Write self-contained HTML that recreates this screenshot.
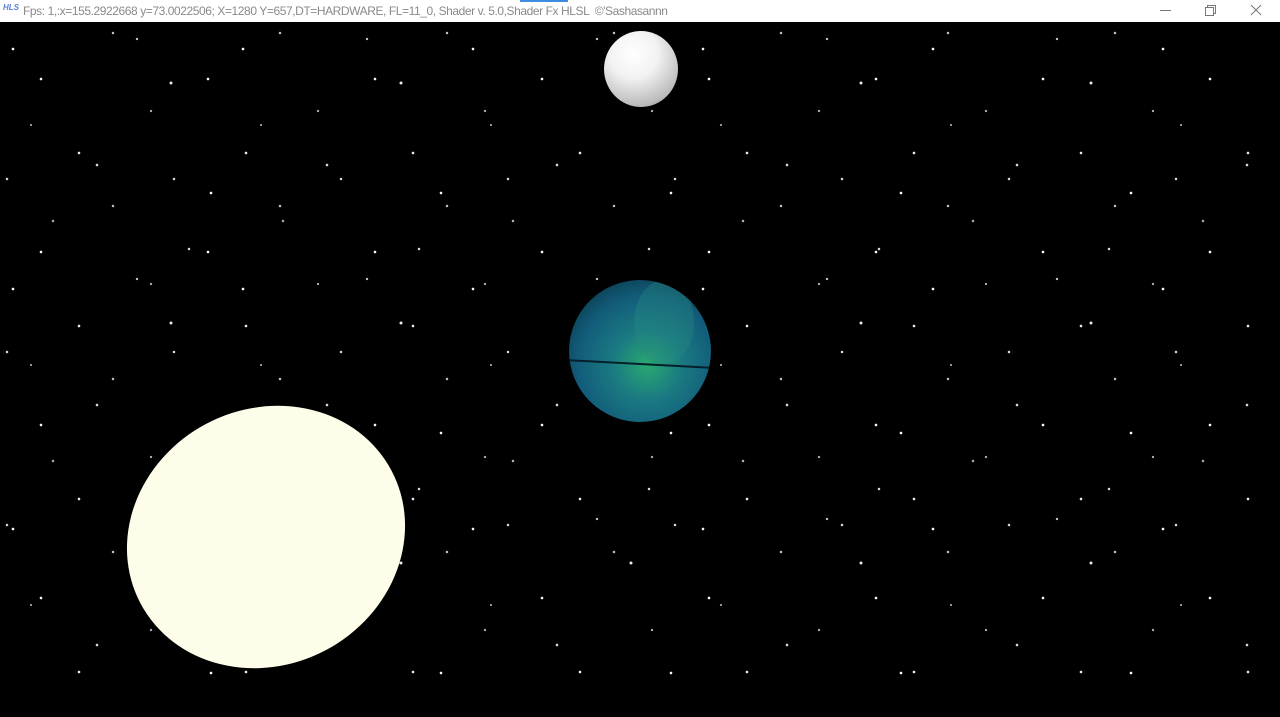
<!DOCTYPE html>
<html><head><style>
html,body{margin:0;padding:0;width:1280px;height:680px;overflow:hidden;background:#000;font-family:"Liberation Sans",sans-serif}
#bar{position:absolute;left:0;top:0;width:1280px;height:22px;background:#fff}
#bar .t{position:absolute;left:23px;top:4px;font-size:12px;color:#8a8a8a;letter-spacing:-0.42px;white-space:nowrap}
#bar .logo{position:absolute;left:3px;top:3px;font-size:8px;color:#5a7fd0;font-style:italic;font-weight:bold}
#blue{position:absolute;left:520px;top:0;width:48px;height:2px;background:#3c8ce0}
#sky{position:absolute;left:0;top:22px;width:1280px;height:658px;
background-image:
radial-gradient(circle at 13px 27px,#fff 1px,transparent 1.6px),
radial-gradient(circle at 97px 143px,#ddd 1px,transparent 1.6px),
radial-gradient(circle at 171px 61px,#eee 1.2px,transparent 1.8px),
radial-gradient(circle at 53px 199px,#bbb 0.9px,transparent 1.5px),
radial-gradient(circle at 211px 171px,#fff 1px,transparent 1.6px),
radial-gradient(circle at 137px 17px,#ccc 0.9px,transparent 1.4px),
radial-gradient(circle at 31px 103px,#aaa 0.8px,transparent 1.3px),
radial-gradient(circle at 189px 227px,#ddd 1px,transparent 1.5px);
background-size:230px 240px}
#sky2{position:absolute;left:0;top:22px;width:1280px;height:658px;
background-image:
radial-gradient(circle at 41px 57px,#fff 1px,transparent 1.6px),
radial-gradient(circle at 113px 11px,#ccc 0.9px,transparent 1.5px),
radial-gradient(circle at 79px 131px,#eee 1px,transparent 1.6px),
radial-gradient(circle at 151px 89px,#bbb 0.8px,transparent 1.4px),
radial-gradient(circle at 7px 157px,#ddd 1px,transparent 1.5px);
background-size:167px 173px}
#sun{position:absolute;left:124px;top:409px;width:284px;height:256px;background:#fdfde9;border-radius:50%;transform:rotate(-28deg)}
#moon{position:absolute;left:604px;top:31px;width:74px;height:76px;border-radius:50%;background:radial-gradient(circle at 40% 30%,#fff 0,#f2f2f2 35%,#bbb 75%,#777 100%)}
#planet{position:absolute;left:569px;top:280px;width:142px;height:142px;border-radius:50%;overflow:hidden;
background:radial-gradient(circle at 55% 60%,#2aa870 0,#1a7a82 30%,#125c7a 60%,#0a3444 88%,#041a20 100%)}
#planet .b{position:absolute;left:0;top:83px;width:142px;height:2px;background:#05202a;transform:rotate(3deg)}
#planet .s{position:absolute;left:30px;top:-20px;width:140px;height:140px;border-radius:50%;border:5px solid rgba(60,200,120,.45);border-left-color:transparent;border-bottom-color:transparent;transform:rotate(10deg)}
#planet .s2{position:absolute;left:65px;top:0px;width:60px;height:85px;border-radius:50%;background:rgba(40,140,130,.35)}
</style></head><body>
<div id="sky"></div><div id="sky2"></div>
<div id="moon"></div>
<div id="planet"><div class="s2"></div><div class="s"></div><div class="b"></div></div>
<div id="sun"></div>
<div id="bar"><span class="logo">HLS</span><span class="t">Fps: 1,:x=155.2922668 y=73.0022506; X=1280 Y=657,DT=HARDWARE, FL=11_0, Shader v. 5.0,Shader Fx HLSL &nbsp;©'Sashasannn</span>
<svg style="position:absolute;left:1150px;top:0" width="130" height="22"><path d="M10 10.5h11" stroke="#777" stroke-width="1"/><rect x="55.5" y="7.5" width="8" height="8" fill="none" stroke="#777"/><path d="M57.5 7.5v-2h8v8h-2" fill="none" stroke="#777"/><path d="M101 5l10 10M111 5l-10 10" stroke="#777"/></svg>
</div>
<div id="blue"></div>
</body></html>
